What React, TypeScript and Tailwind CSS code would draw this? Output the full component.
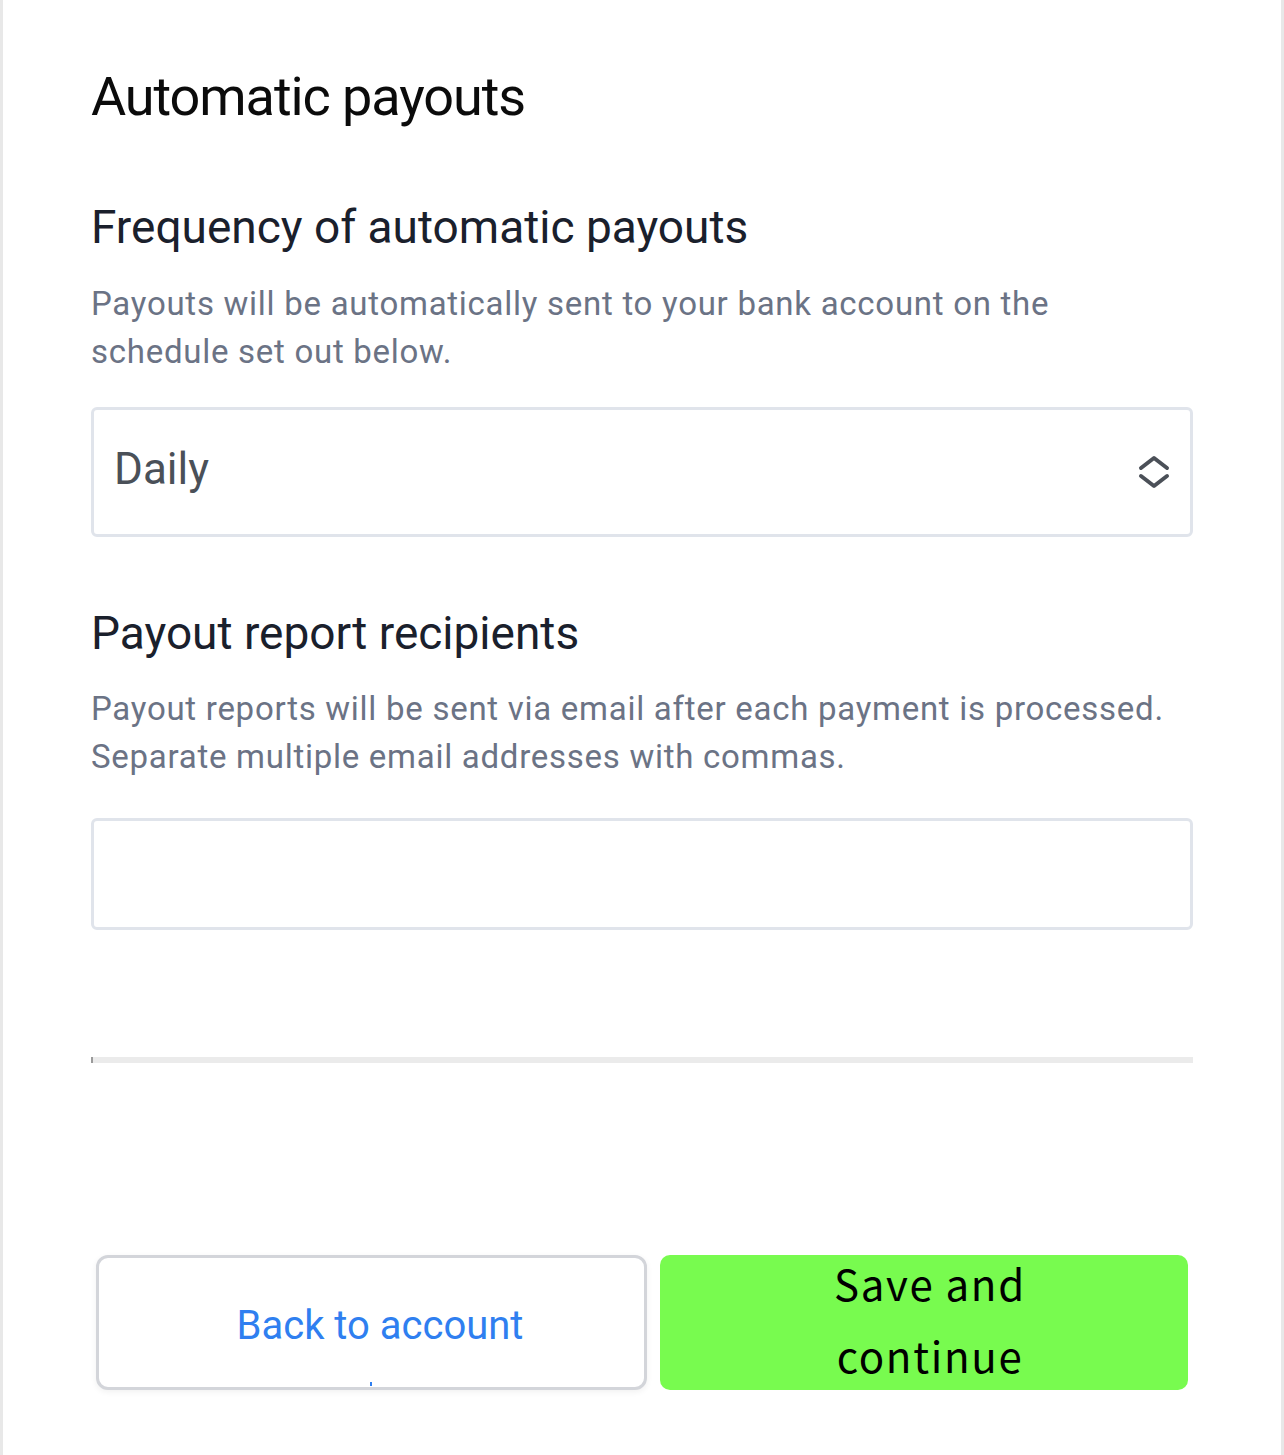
import React from "react";

function ChevronUpDown() {
  return (
    <svg width="32" height="36" viewBox="0 0 32 36" fill="none" stroke="#4b5058" strokeWidth="4" strokeLinecap="round" strokeLinejoin="round">
      <path d="M3 14 L16 4 L29 14" />
      <path d="M3 22 L16 32 L29 22" />
    </svg>
  );
}

export default function App() {
  return (
    <div className="flex h-[1455px] w-full bg-white font-['Roboto',sans-serif]">
      <div className="w-[3px] shrink-0 bg-[#e8e8e8]" />
      <main className="flex flex-1 flex-col px-[88px] pt-[67px]">
        <h1 className="text-[54px] leading-[60px] tracking-[-0.02em] text-[#0b0b0b]">
          Automatic payouts
        </h1>

        <h2 className="mt-[72px] text-[46px] leading-[56px] text-[#1a202c]">
          Frequency of automatic payouts
        </h2>
        <p className="mt-[25px] text-[33px] leading-[48px] tracking-[0.022em] text-[#6b7385]">
          Payouts will be automatically sent to your bank account on the
          <br />
          schedule set out below.
        </p>

        <div className="mt-[31px] flex h-[130px] items-center justify-between rounded-[6px] border-[3px] border-[#e0e4eb] pl-[20px] pr-[20px]">
          <span className="mb-[6px] text-[44px] text-[#4a5058]">Daily</span>
          <ChevronUpDown />
        </div>

        <h2 className="mt-[68px] text-[46px] leading-[56px] text-[#1a202c]">
          Payout report recipients
        </h2>
        <p className="mt-[24px] text-[33px] leading-[48px] tracking-[0.022em] text-[#6b7385]">
          Payout reports will be sent via email after each payment is processed.
          <br />
          Separate multiple email addresses with commas.
        </p>

        <div className="mt-[37px] h-[112px] rounded-[6px] border-[3px] border-[#e0e4eb]" />

        <div className="mt-[127px] flex h-[6px] bg-[#ebebeb]">
          <div className="w-[2px] bg-[#9a9a9a]" />
        </div>

        <div className="mt-[192px] flex gap-[13px] pl-[5px]">
          <button className="relative flex h-[135px] w-[551px] items-center justify-center rounded-[12px] border-[3px] border-[#d3d5da] bg-white pl-[17px] shadow-[0_2px_6px_rgba(0,0,0,0.06)]">
            <span className="mt-[6px] text-[40px] text-[#2f7ff0]">Back to account</span>
            <span className="absolute bottom-[1px] left-[271px] h-[4px] w-[2px] bg-[#2f7ff0]" />
          </button>
          <button className="flex h-[135px] w-[528px] items-center justify-center rounded-[10px] bg-[#78fb4f] pl-[12px]">
            <span className="mb-[8px] text-center font-['Noto_Sans_CJK_JP',sans-serif] text-[42px] leading-[72px] tracking-[0.04em] text-black">
              Save and
              <br />
              continue
            </span>
          </button>
        </div>
      </main>
      <div className="w-[3px] shrink-0 bg-[#e8e8e8]" />
    </div>
  );
}
